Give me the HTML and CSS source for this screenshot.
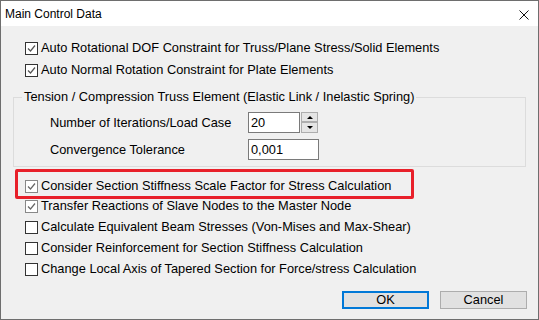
FILE: index.html
```html
<!DOCTYPE html>
<html lang="en">
<head>
    <meta charset="UTF-8">
    <title>Main Control Data</title>
    <link rel="stylesheet" href="styles.css">
</head>
<body>
    <div class="window">
        <div class="titlebar">
            <span class="title">Main Control Data</span>
            <svg class="close" width="10" height="10" viewBox="0 0 10 10">
                <path d="M0.5 0.5 L9.5 9.5 M9.5 0.5 L0.5 9.5" stroke="#111" stroke-width="1" fill="none"/>
            </svg>
        </div>

        <div class="content">
            <div class="check-list top-list">
                <div class="check-row">
                    <span class="box checked"><svg width="11" height="11" viewBox="0 0 11 11"><path d="M2 5.5 L4.5 8 L9 2.5" stroke="#555" stroke-width="1.2" fill="none"/></svg></span>
                    <span>Auto Rotational DOF Constraint for Truss/Plane Stress/Solid Elements</span>
                </div>
                <div class="check-row">
                    <span class="box checked"><svg width="11" height="11" viewBox="0 0 11 11"><path d="M2 5.5 L4.5 8 L9 2.5" stroke="#555" stroke-width="1.2" fill="none"/></svg></span>
                    <span>Auto Normal Rotation Constraint for Plate Elements</span>
                </div>
            </div>

            <fieldset class="group">
                <legend>Tension / Compression Truss Element (Elastic Link / Inelastic Spring)</legend>
                <div class="field-row">
                    <span class="field-label">Number of Iterations/Load Case</span>
                    <div class="spin">
                        <div class="textbox narrow">20</div>
                        <div class="spin-buttons">
                            <span class="spin-btn"><span class="arrow up"></span></span>
                            <span class="spin-btn tall"><span class="arrow down"></span></span>
                        </div>
                    </div>
                </div>
                <div class="field-row">
                    <span class="field-label">Convergence Tolerance</span>
                    <div class="textbox wide">0,001</div>
                </div>
            </fieldset>

            <!-- 红框标注 -->
            <div class="highlight">
                <div class="check-row">
                    <span class="box checked dim"><svg width="11" height="11" viewBox="0 0 11 11"><path d="M2 5.5 L4.5 8 L9 2.5" stroke="#666" stroke-width="1.2" fill="none"/></svg></span>
                    <span>Consider Section Stiffness Scale Factor for Stress Calculation</span>
                </div>
            </div>

            <div class="check-list bottom-list">
                <div class="check-row">
                    <span class="box checked dim"><svg width="11" height="11" viewBox="0 0 11 11"><path d="M2 5.5 L4.5 8 L9 2.5" stroke="#666" stroke-width="1.2" fill="none"/></svg></span>
                    <span>Transfer Reactions of Slave Nodes to the Master Node</span>
                </div>
                <div class="check-row">
                    <span class="box"></span>
                    <span>Calculate Equivalent Beam Stresses (Von-Mises and Max-Shear)</span>
                </div>
                <div class="check-row">
                    <span class="box"></span>
                    <span>Consider Reinforcement for Section Stiffness Calculation</span>
                </div>
                <div class="check-row">
                    <span class="box"></span>
                    <span>Change Local Axis of Tapered Section for Force/stress Calculation</span>
                </div>
            </div>

            <div class="buttons">
                <div class="btn default">OK</div>
                <div class="btn">Cancel</div>
            </div>
        </div>
    </div>
</body>
</html>
```

FILE: styles.css
```css
html, body {
    margin: 0;
    padding: 0;
    width: 100%;
    height: 100%;
    overflow: hidden;
}

body {
    font-family: "Liberation Sans", Arial, sans-serif;
    font-size: 12.8px;
    color: #000;
    background: #f0f0f0;
}

.window {
    width: 539px;
    height: 320px;
    box-sizing: border-box;
    border: 1px solid #6e6e6e;
    background: #f0f0f0;
    display: flex;
    flex-direction: column;
}

.titlebar {
    height: 25px;
    background: #fff;
    display: flex;
    align-items: center;
    justify-content: space-between;
    padding: 0 9px 0 4px;
    flex-shrink: 0;
}

.title {
    font-size: 12px;
}

.close {
    display: block;
    margin-top: 2px;
}

.content {
    flex: 1;
    display: flex;
    flex-direction: column;
}

.check-list {
    display: flex;
    flex-direction: column;
}

.top-list {
    margin: 14px 0 0 24px;
    gap: 6px;
}

.bottom-list {
    margin: -1px 0 0 24px;
    gap: 5px;
}

.check-row {
    display: flex;
    align-items: center;
    height: 16px;
    line-height: 16px;
    white-space: nowrap;
}

.box {
    width: 13px;
    height: 13px;
    box-sizing: border-box;
    border: 1px solid #333;
    background: #fff;
    margin-right: 3px;
    flex-shrink: 0;
    display: flex;
    align-items: center;
    justify-content: center;
}

.box.dim {
    border-color: #888;
}

.box svg {
    display: block;
}

/* 分组框 */
.group {
    margin: 11px 12px 0 12px;
    padding: 7px 0 6px 8px;
    border: 1px solid #dcdcdc;
    min-width: 0;
}

.group legend {
    padding: 0 2px;
    line-height: 16px;
}

.field-row {
    display: grid;
    grid-template-columns: 198px auto;
    align-items: center;
    height: 21px;
    padding-left: 28px;
}

.field-row + .field-row {
    margin-top: 6px;
}

.spin {
    display: flex;
    gap: 1px;
}

.textbox {
    height: 21px;
    box-sizing: border-box;
    border: 1px solid #7a7a7a;
    background: #fff;
    padding-left: 2px;
    line-height: 19px;
}

.textbox.narrow {
    width: 52px;
}

.textbox.wide {
    width: 71px;
}

.spin-buttons {
    display: flex;
    flex-direction: column;
    width: 17px;
}

.spin-btn {
    height: 10px;
    box-sizing: border-box;
    border: 1px solid #adadad;
    background: #e5e5e5;
    display: flex;
    align-items: center;
    justify-content: center;
}

.spin-btn.tall {
    height: 11px;
}

.arrow {
    width: 0;
    height: 0;
    border-left: 3px solid transparent;
    border-right: 3px solid transparent;
}

.arrow.up {
    border-bottom: 3px solid #000;
}

.arrow.down {
    border-top: 3px solid #000;
}

.highlight {
    margin: 2px 0 0 14px;
    width: 399px;
    height: 30px;
    box-sizing: border-box;
    border: 3px solid #e8202a;
    border-radius: 2px;
    padding: 6px 0 0 7px;
}

.buttons {
    display: flex;
    justify-content: flex-end;
    gap: 11px;
    padding-right: 11px;
    margin-top: 14px;
}

.btn {
    width: 87px;
    height: 18px;
    box-sizing: border-box;
    border: 1px solid #adadad;
    background: #e1e1e1;
    text-align: center;
    line-height: 16px;
}

.btn.default {
    border: 2px solid #0078d7;
    line-height: 14px;
}
```
